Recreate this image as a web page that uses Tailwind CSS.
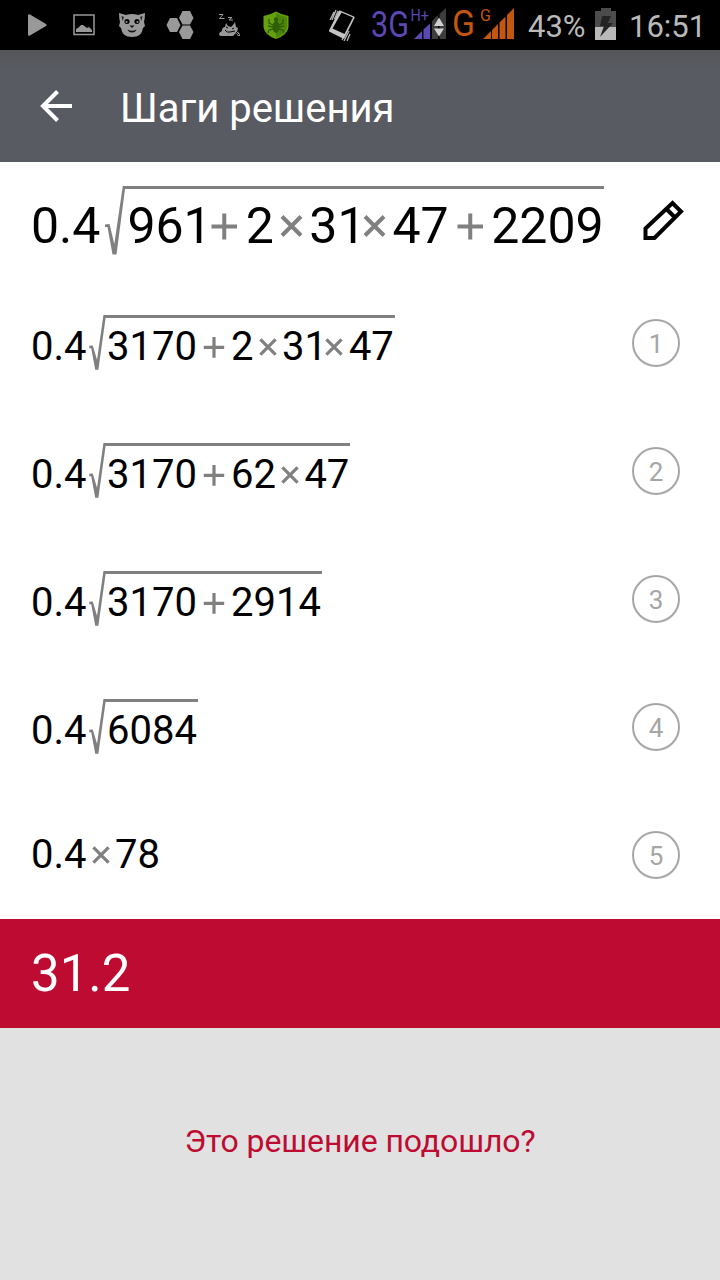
<!DOCTYPE html>
<html lang="ru">
<head>
    <meta charset="UTF-8">
    <meta name="viewport" content="width=device-width, initial-scale=1.0">
    <title>Шаги решения</title>
    <script src="https://cdn.jsdelivr.net/npm/@tailwindcss/browser@4"></script>
</head>
<body class="bg-[#e1e1e1] font-['Roboto','Noto_Sans',sans-serif] h-[1280px] flex flex-col overflow-hidden">
    <!-- Status bar -->
    <div class="bg-black h-[50px] shrink-0 flex items-center text-[#b9b9b9]">
        <svg class="w-[310px] h-[50px] shrink-0" viewBox="0 0 310 50" fill="#999">
            <path d="M28 15.500q0-2 2-1L46 24q1.500 1 0 2L30 35.500q-2 1-2-1z"/>
            <path d="M74 15h20v19.500H74z" fill="none" stroke="#999" stroke-width="1.500"/>
            <path d="M76 32v-3l2-1 3-3h2l4 3 2-1 3 3v2z"/>
            <!-- cat -->
            <path d="M119 13l7 2q6-2 12 0l7-2q0 5-1 9l1 4-2 2q-1 9-11 9t-11-9l-2-2 1-4q-1-4-1-9z"/>
            <path d="M121.500 16l2.500 1-1.500 4zM142.500 16l-2.500 1 1.500 4z" fill="#222"/>
            <ellipse cx="127" cy="21.500" rx="2.600" ry="2.500" fill="#000"/>
            <ellipse cx="137" cy="21.500" rx="2.600" ry="2.500" fill="#000"/>
            <circle cx="126.500" cy="22" r="1"/>
            <circle cx="137.500" cy="22" r="1"/>
            <path d="M129.500 25.500h5l-2.500 2.500z" fill="#111"/>
            <path d="M127.500 29.500q4.500 2.500 9 0-1 3-4.500 3t-4.500-3z" fill="#111"/>
            <!-- honeycomb -->
            <path d="M166.500 25l3.500-7h7l3.500 7-3.500 7h-7zM179 18l3.500-7h7.500l3.500 7-3.500 6.500h-7.500zM179 32l3.500-6.500h7.500l3.500 6.500-3.500 7h-7.500z"/>
            <!-- sleeping dragon -->
            <path d="M219 14.500h4l-3.500 4h5M228 17.500h4l-3 2.500h4" fill="none" stroke="#999" stroke-width="1"/>
            <path d="M219 35q0-3 3-4 0-4 3-4l1-4 2 3 3 1 2-2 2-3 1 5 2 1-1 4q3 0 3 4h-2l-2-3-3 3h-12z"/>
            <path d="M225 30q2 3 5 2l5-1M226 27l2 1M232 29l2-1M236 32l3 3" fill="none" stroke="#000" stroke-width="1"/>
            <!-- shield -->
            <path d="M276 11.500q6 3.500 12.500 4.500v11q-1 8-12.500 12-11.500-4-12.500-12V16q6.500-1 12.500-4.500z" fill="#65a00d"/>
            <path d="M276 13q5.500 3 11 4v10q-1 7-11 10.500z" fill="#4b8608"/>
            <ellipse cx="276" cy="27" rx="3.500" ry="6" fill="#2f5e07"/>
            <circle cx="276" cy="19.500" r="2.200" fill="#2f5e07"/>
            <path d="M273 25l-4-2v-4M279 25l4-2v-4M273 27l-5-1M279 27l5-1M273 29l-4 1-1 3M279 29l4 1 1 3" fill="none" stroke="#2f5e07" stroke-width="1.300"/>
        </svg>
        <!-- Vibrate and signal -->
        <svg class="w-[210px] h-[50px] shrink-0" viewBox="310 0 210 50">
            <path d="M340 10.500l14 6q1 .5.500 1.500l-10 20q-.5 1-1.500.500l-13-6.500q-1.500-.5-1-1.500l9.500-19q.5-1.500 1.500-1z" fill="#c5c5c5"/>
            <path d="M341.500 12.500l11.500 5-8.500 16.500-12-5.500z" fill="#000"/>
            <path d="M332 20l4-10M334.500 19l3.500-8M330 20l4-8M344 41l5-10M342 40l1-2M347 41l3-7" stroke="#b5b5b5" stroke-width="1.300"/>
            <text x="371" y="37" font-size="37" fill="#5b48b4" textLength="38" lengthAdjust="spacingAndGlyphs">3G</text>
            <text x="410.500" y="20.500" font-size="17" fill="#5b48b4" textLength="18.500" lengthAdjust="spacingAndGlyphs">H+</text>
            <path d="M414 39l8-8v8zM423.500 29.500l6.500-6V39h-6.500z" fill="#5b48b4"/>
            <path d="M432 21l6-6v24h-6zM439.500 14l6.500-6v31h-6.500z" fill="#3d3d3d"/>
            <path d="M439 17.500l5 8.500h-10zM439 36.500l5-8h-10z" fill="#d0d0d0"/>
            <text x="452" y="36" font-size="37" fill="#c4570f" textLength="23" lengthAdjust="spacingAndGlyphs">G</text>
            <text x="480" y="20.500" font-size="16" fill="#c4570f">G</text>
            <path d="M483 39l8-8v8zM492 30l6-6v15h-6zM499.500 22.500l6-6V39h-6zM507 15l7-7v31h-7z" fill="#c4570f"/>
        </svg>
        <span class="text-[31px] leading-[50px] pt-[3px] ml-[8px] w-[67px]">43%</span>
        <svg class="w-[22px] h-[50px]" viewBox="0 0 22 50">
            <path d="M0 11h6V8h10v3h5v16H0z" fill="#4c4c4c"/>
            <path d="M0 27h21v13H0z" fill="#b9b9b9"/>
            <path d="M7 16h9l-3 7h5L5 37l4-11H5z" fill="#242424"/>
        </svg>
        <span class="text-[31px] leading-[50px] pt-[3px] ml-[12px]">16:51</span>
    </div>

    <!-- App bar -->
    <div class="bg-linear-to-b from-[#54565a] to-[#585b62] to-20% h-[112px] shrink-0 flex items-center pl-10 text-white">
        <svg class="w-8 h-8 mr-12" viewBox="0 0 32 32" fill="none" stroke="#fff" stroke-width="4">
            <path d="M32 16H3M17.500 1.500L3 16l14.500 14.500"/>
        </svg>
        <h1 class="text-[40px] leading-[48px] pt-[5px]">Шаги решения</h1>
    </div>

    <!-- Shapes shared by all expressions -->
    <svg class="hidden">
        <symbol id="root" viewBox="0 0 27 70">
            <path d="M5 38.500l4.500-.500L14.300 58 22.800 0H27v3h-2L16.500 68.500h-4L7.500 41H5z" fill="#808080"/>
        </symbol>
        <symbol id="root-small" viewBox="0 0 27 70">
            <path d="M4 38.500l4.500-.500 5.300 18L21.800 0H28v3.750h-3.500L15.500 68.500h-4L6.500 41.500H4z" fill="#808080"/>
        </symbol>
        <symbol id="plus" viewBox="0 0 42.500 60">
            <path d="M8.500 30.500h25.500M21.250 17.500v26" stroke="#808080" stroke-width="4"/>
        </symbol>
        <symbol id="times" viewBox="0 0 35.500 60">
            <path d="M8 20.500l19 19M27 20.500l-19 19" stroke="#808080" stroke-width="4"/>
        </symbol>
    </svg>

    <!-- Solution -->
    <div class="bg-white shrink-0 pl-[31px] pr-10 text-black">
        <div class="h-[117px] flex items-center justify-between">
            <div class="flex items-end text-[50px] leading-[1.2em]">
                <span>0.4</span>
                <svg class="w-[0.54em] h-[1.4em]"><use href="#root"/></svg>
                <span class="flex items-end h-[1.4em] border-t-3 border-[#808080]">961<svg class="w-[0.85em] h-[1.2em] -ml-[0.17em]"><use href="#plus"/></svg>2<svg class="w-[0.71em] h-[1.2em]"><use href="#times"/></svg>31<svg class="w-[0.71em] h-[1.2em] -ml-[0.17em]"><use href="#times"/></svg>47<svg class="w-[0.85em] h-[1.2em]"><use href="#plus"/></svg>2209</span>
            </div>
            <svg class="w-[41px] h-[41px] -mr-1" viewBox="0 0 41 41" fill="none" stroke="#000" stroke-width="4">
                <path d="M2.500 28.500L29.500 3 38 11.500 11.500 38h-9zM23.500 9l8 8"/>
            </svg>
        </div>

        <div class="h-32 flex items-center justify-between">
            <div class="flex items-end text-[40px] leading-[1.2em]">
                <span>0.4</span>
                <svg class="w-[0.54em] h-[1.4em] -ml-px"><use href="#root-small"/></svg>
                <span class="flex items-end h-[1.4em] border-t-3 border-[#808080] pr-px">3170<svg class="w-[0.85em] h-[1.2em]"><use href="#plus"/></svg>2<svg class="w-[0.71em] h-[1.2em]"><use href="#times"/></svg>31<svg class="w-[0.71em] h-[1.2em] -ml-[0.16em]"><use href="#times"/></svg>47</span>
            </div>
            <span class="size-12 rounded-full border-2 border-[#a6a6a6] text-[#a6a6a6] text-[26px] leading-none flex items-center justify-center pt-px">1</span>
        </div>

        <div class="h-32 flex items-center justify-between">
            <div class="flex items-end text-[40px] leading-[1.2em]">
                <span>0.4</span>
                <svg class="w-[0.54em] h-[1.4em] -ml-px"><use href="#root-small"/></svg>
                <span class="flex items-end h-[1.4em] border-t-3 border-[#808080] pr-px">3170<svg class="w-[0.85em] h-[1.2em]"><use href="#plus"/></svg>62<svg class="w-[0.71em] h-[1.2em]"><use href="#times"/></svg>47</span>
            </div>
            <span class="size-12 rounded-full border-2 border-[#a6a6a6] text-[#a6a6a6] text-[26px] leading-none flex items-center justify-center pt-px">2</span>
        </div>

        <div class="h-32 flex items-center justify-between">
            <div class="flex items-end text-[40px] leading-[1.2em]">
                <span>0.4</span>
                <svg class="w-[0.54em] h-[1.4em] -ml-px"><use href="#root-small"/></svg>
                <span class="flex items-end h-[1.4em] border-t-3 border-[#808080] pr-px">3170<svg class="w-[0.85em] h-[1.2em]"><use href="#plus"/></svg>2914</span>
            </div>
            <span class="size-12 rounded-full border-2 border-[#a6a6a6] text-[#a6a6a6] text-[26px] leading-none flex items-center justify-center pt-px">3</span>
        </div>

        <div class="h-32 flex items-center justify-between">
            <div class="flex items-end text-[40px] leading-[1.2em]">
                <span>0.4</span>
                <svg class="w-[0.54em] h-[1.4em] -ml-px"><use href="#root-small"/></svg>
                <span class="flex items-end h-[1.4em] border-t-3 border-[#808080] pr-px">6084</span>
            </div>
            <span class="size-12 rounded-full border-2 border-[#a6a6a6] text-[#a6a6a6] text-[26px] leading-none flex items-center justify-center pt-px">4</span>
        </div>

        <div class="h-32 flex items-center justify-between">
            <div class="flex items-end text-[40px] leading-[1.2em]">
                0.4<svg class="w-[0.71em] h-[1.2em]"><use href="#times"/></svg>78
            </div>
            <span class="size-12 rounded-full border-2 border-[#a6a6a6] text-[#a6a6a6] text-[26px] leading-none flex items-center justify-center pt-px">5</span>
        </div>
    </div>

    <!-- Answer -->
    <div class="bg-[#be0b32] h-[109px] shrink-0 flex items-center pl-[31px] text-white text-[51px] leading-none">31.2</div>

    <!-- Feedback -->
    <div class="grow flex justify-center pt-[93px]">
        <a href="#" class="text-[#be0b32] text-[32px] leading-[40px] tracking-[-0.1px]">Это решение подошло?</a>
    </div>
</body>
</html>
